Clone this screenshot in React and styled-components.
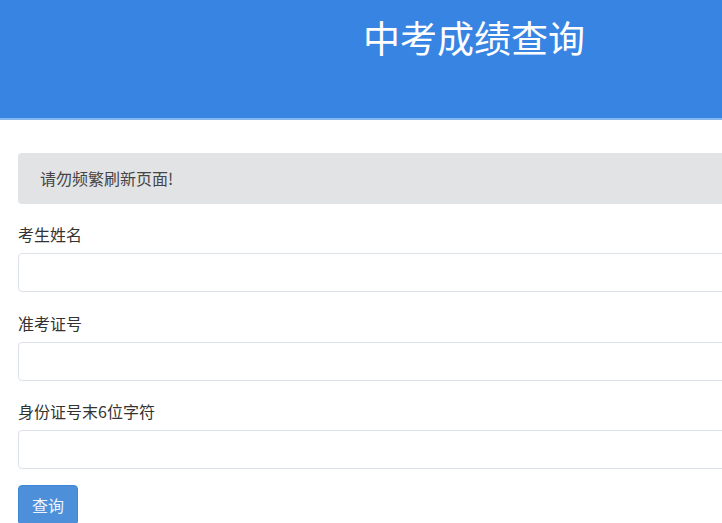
import React from "react";
import styled, { createGlobalStyle } from "styled-components";

const Global = createGlobalStyle`
  html, body { margin: 0; padding: 0; background: #fff; }
  body { font-family: "Noto Sans CJK SC", "Liberation Sans", sans-serif; }
  * { box-sizing: border-box; }
`;

const Viewport = styled.div`
  width: 100%;
  overflow: hidden;
`;

const Page = styled.div`
  width: 948px;
`;

const Header = styled.header`
  height: 120px;
  background: #3884e3;
  border-bottom: 2px solid #86b6f0;
  padding-top: 11px;
`;

const Title = styled.h1`
  margin: 0;
  text-align: center;
  color: #fff;
  font-size: 37px;
  font-weight: 400;
  line-height: 52px;
`;

const Main = styled.main`
  padding: 33px 18px 0;
  display: flex;
  flex-direction: column;
`;

const Alert = styled.div`
  background: #e2e3e5;
  border-radius: 4px;
  color: #454545;
  font-size: 16px;
  line-height: 21px;
  padding: 15px 22px;
  margin-bottom: 20px;
`;

const Group = styled.div`
  display: flex;
  flex-direction: column;
  margin-bottom: ${(p) => p.$gap}px;
`;

const Label = styled.label`
  font-size: 16px;
  line-height: 20px;
  color: #333;
  margin-bottom: 9px;
`;

const Input = styled.input`
  height: 39px;
  border: 1px solid #dde2e8;
  border-radius: 4px;
  background: #fff;
  padding: 0 12px;
  font-size: 14px;
  outline: none;
`;

const Button = styled.button`
  align-self: flex-start;
  width: 60px;
  height: 40px;
  border: 1px solid #3d86d9;
  border-radius: 4px;
  background: #4d8fd8;
  color: #eef4fc;
  font-family: inherit;
  font-size: 16px;
  padding: 0;
`;

const fields = [
  { label: "考生姓名", gap: 21 },
  { label: "准考证号", gap: 20 },
  { label: "身份证号末6位字符", gap: 16 },
];

export default function App() {
  return (
    <Viewport>
      <Global />
      <Page>
        <Header>
          <Title>中考成绩查询</Title>
        </Header>
        <Main>
          <Alert>请勿频繁刷新页面!</Alert>
          {fields.map((f) => (
            <Group key={f.label} $gap={f.gap}>
              <Label>{f.label}</Label>
              <Input type="text" />
            </Group>
          ))}
          <Button>查询</Button>
        </Main>
      </Page>
    </Viewport>
  );
}
